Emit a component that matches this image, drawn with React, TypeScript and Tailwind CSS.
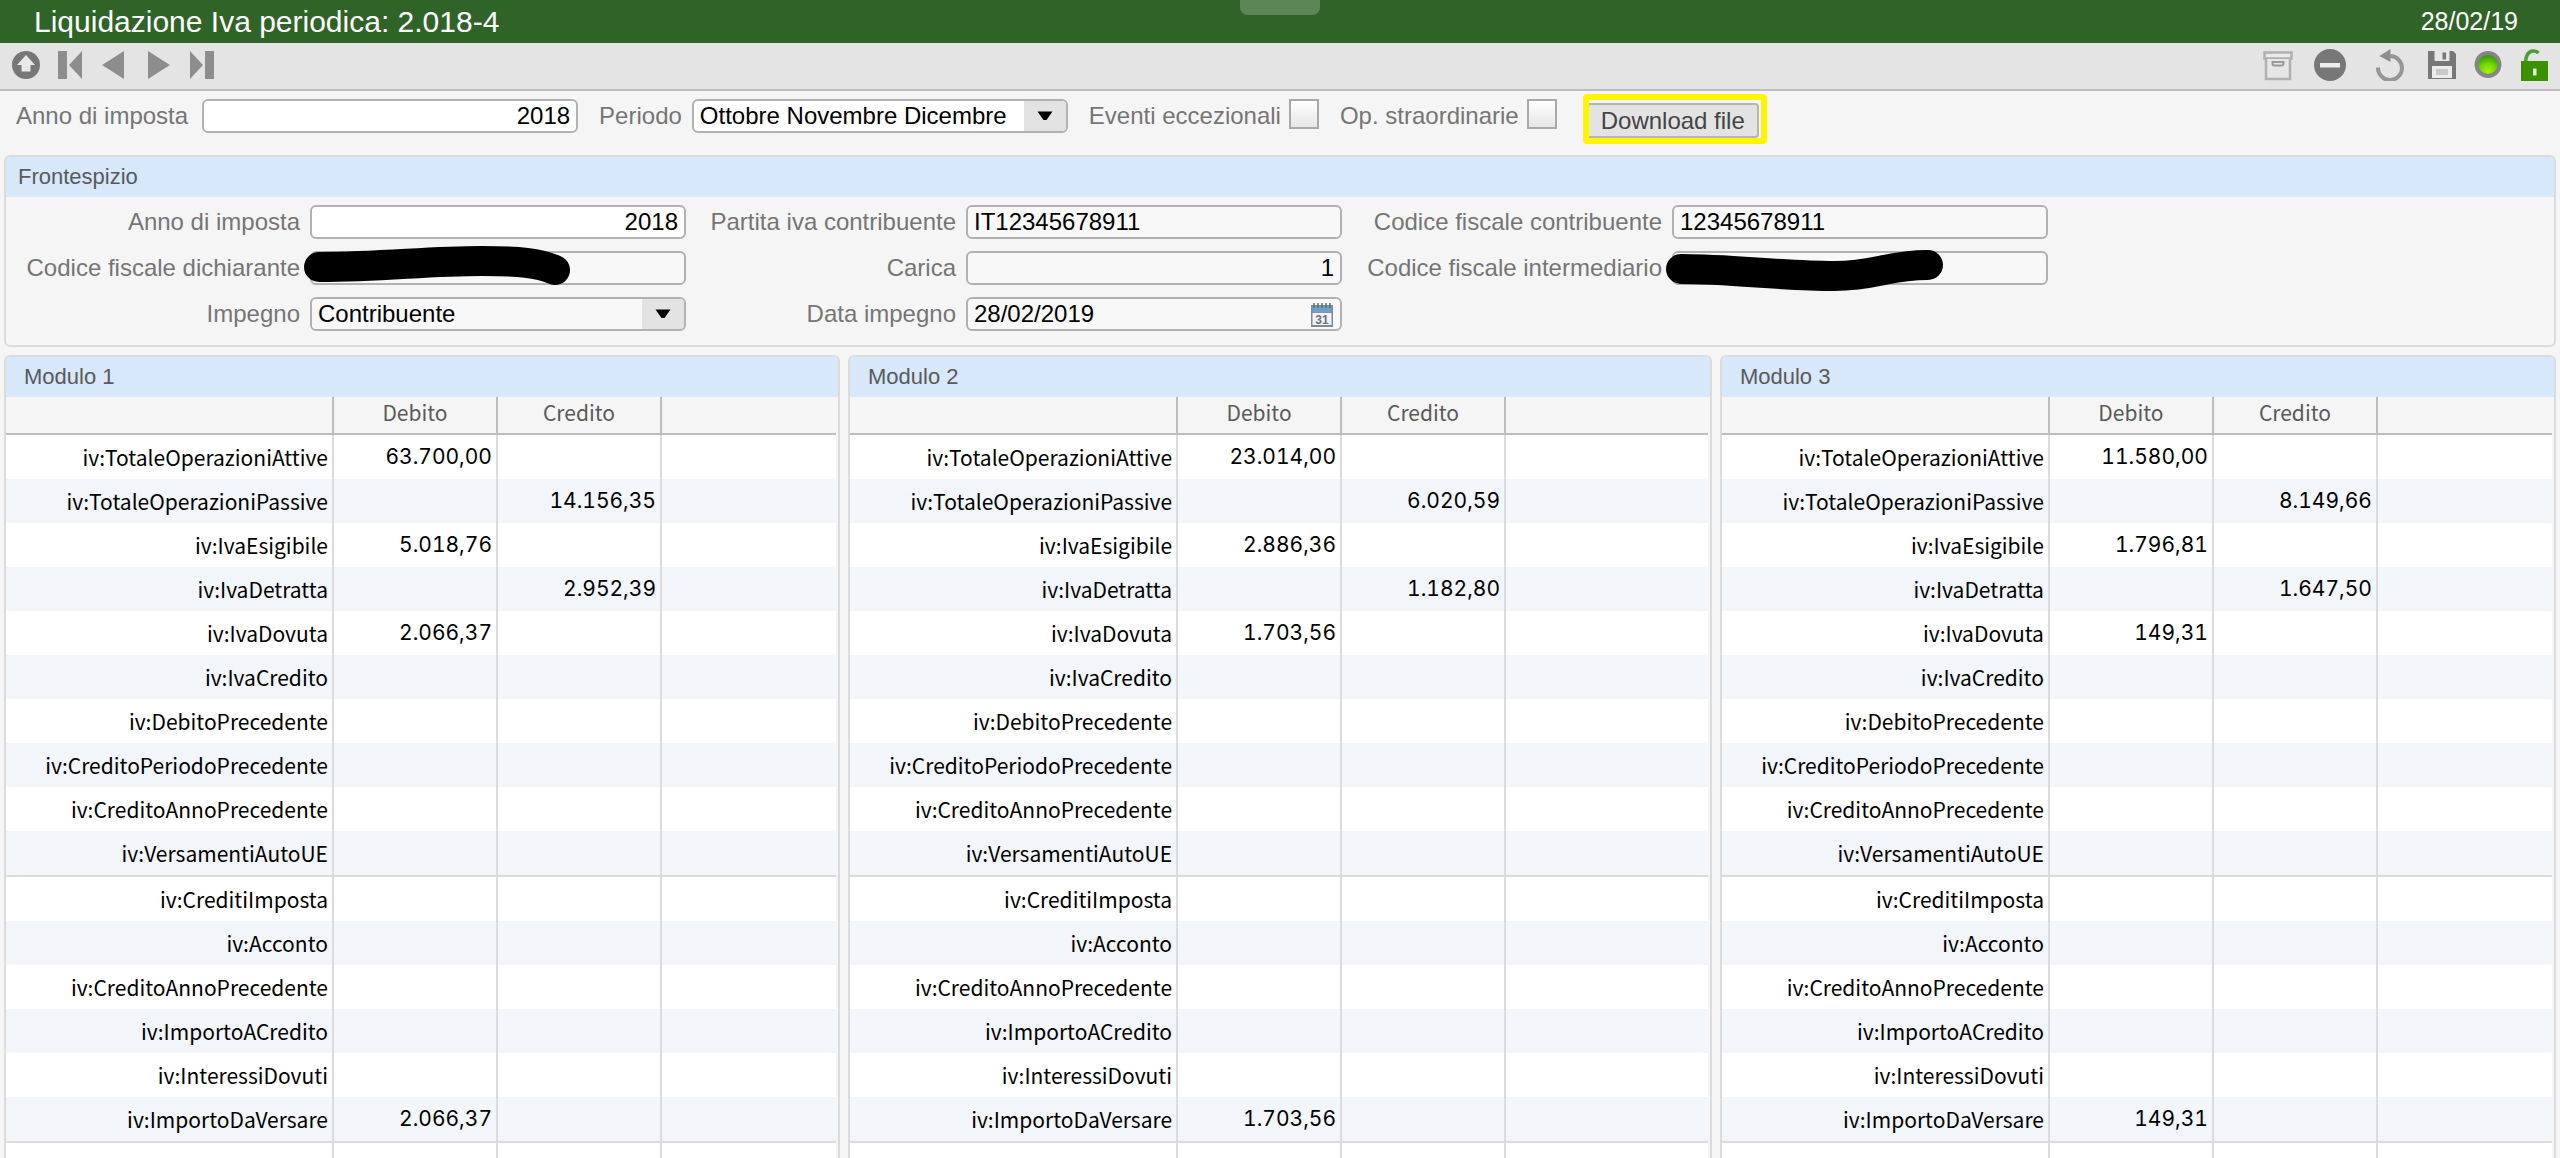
import React from 'react';

type Row = { name: string; debito?: string; credito?: string; last?: boolean };
type Amounts = Record<string, string>;

const entries = [
  { name: 'iv:TotaleOperazioniAttive', side: 'debito' },
  { name: 'iv:TotaleOperazioniPassive', side: 'credito' },
  { name: 'iv:IvaEsigibile', side: 'debito' },
  { name: 'iv:IvaDetratta', side: 'credito' },
  { name: 'iv:IvaDovuta', side: 'debito' },
  { name: 'iv:IvaCredito', side: 'credito' },
  { name: 'iv:DebitoPrecedente', side: 'debito' },
  { name: 'iv:CreditoPeriodoPrecedente', side: 'credito' },
  { name: 'iv:CreditoAnnoPrecedente', side: 'credito' },
  { name: 'iv:VersamentiAutoUE', side: 'credito', last: true },
  { name: 'iv:CreditiImposta', side: 'credito' },
  { name: 'iv:Acconto', side: 'credito' },
  { name: 'iv:CreditoAnnoPrecedente', side: 'credito' },
  { name: 'iv:ImportoACredito', side: 'credito' },
  { name: 'iv:InteressiDovuti', side: 'debito' },
  { name: 'iv:ImportoDaVersare', side: 'debito', last: true },
];

const modules: { title: string; amounts: Amounts }[] = [
  {
    title: 'Modulo 1',
    amounts: {
      'iv:TotaleOperazioniAttive': '63.700,00',
      'iv:TotaleOperazioniPassive': '14.156,35',
      'iv:IvaEsigibile': '5.018,76',
      'iv:IvaDetratta': '2.952,39',
      'iv:IvaDovuta': '2.066,37',
      'iv:ImportoDaVersare': '2.066,37',
    },
  },
  {
    title: 'Modulo 2',
    amounts: {
      'iv:TotaleOperazioniAttive': '23.014,00',
      'iv:TotaleOperazioniPassive': '6.020,59',
      'iv:IvaEsigibile': '2.886,36',
      'iv:IvaDetratta': '1.182,80',
      'iv:IvaDovuta': '1.703,56',
      'iv:ImportoDaVersare': '1.703,56',
    },
  },
  {
    title: 'Modulo 3',
    amounts: {
      'iv:TotaleOperazioniAttive': '11.580,00',
      'iv:TotaleOperazioniPassive': '8.149,66',
      'iv:IvaEsigibile': '1.796,81',
      'iv:IvaDetratta': '1.647,50',
      'iv:IvaDovuta': '149,31',
      'iv:ImportoDaVersare': '149,31',
    },
  },
];

const boxClass = 'block h-[34px] w-full rounded-md border-2 border-[#b1b1b1] px-1.5 text-2xl leading-[30px] text-black';

function Label({ htmlFor, children }: { htmlFor: string; children: React.ReactNode }) {
  return (
    <label htmlFor={htmlFor} className="text-right text-2xl leading-[34px] whitespace-nowrap text-[#757575]">
      {children}
    </label>
  );
}

function TextBox({ id, value = '', numeric, editable }: { id: string; value?: string; numeric?: boolean; editable?: boolean }) {
  return (
    <input
      id={id}
      type="text"
      defaultValue={value}
      readOnly={!editable}
      className={`${boxClass} ${numeric ? 'text-right' : ''} ${editable ? 'bg-white' : 'bg-[#f8f8f8]'}`}
    />
  );
}

function SelectBox({ id, value, editable }: { id: string; value: string; editable?: boolean }) {
  return (
    <div className="relative">
      <select id={id} defaultValue={value} className={`${boxClass} appearance-none pr-11 ${editable ? 'bg-white' : 'bg-[#f8f8f8]'}`}>
        <option>{value}</option>
      </select>
      <span className="pointer-events-none absolute inset-y-0.5 right-0.5 flex w-[42px] items-center justify-center rounded-r bg-[#e3e3e3]">
        <svg viewBox="0 0 16 10" className="h-2.5 w-4">
          <path d="M0.5 0.5h15L9.5 9h-3z" fill="#000" />
        </svg>
      </span>
    </div>
  );
}

function CheckField({ id, label }: { id: string; label: string }) {
  return (
    <div className="flex gap-2">
      <Label htmlFor={id}>{label}</Label>
      <input
        id={id}
        type="checkbox"
        className="size-[30px] appearance-none border-2 border-[#a9a9a9] bg-linear-to-b from-white to-[#e6e6e6]"
      />
    </div>
  );
}

function ToolButton({ label, children }: { label: string; children: React.ReactNode }) {
  return (
    <button type="button" aria-label={label} className="block">
      {children}
    </button>
  );
}

function Toolbar() {
  return (
    <div className="flex h-12 shrink-0 items-start justify-between border-b-2 border-[#bdbdbd] bg-[#e4e4e4] pr-2.5 pl-3">
      <div className="flex gap-4 pt-2">
        <ToolButton label="Su">
          <svg viewBox="0 0 28 28" className="size-7">
            <circle cx="14" cy="14" r="14" fill="#777" />
            <path d="M14 4l9 10h-4.500v6.500h-9V14H5z" fill="#e8e8e8" />
          </svg>
        </ToolButton>
        <ToolButton label="Primo">
          <svg viewBox="0 0 28 28" className="size-7">
            <path d="M2 0h9v28H2zM26 0v28L13 14z" fill="#8d8d8d" />
          </svg>
        </ToolButton>
        <ToolButton label="Precedente">
          <svg viewBox="0 0 28 28" className="size-7">
            <path d="M24 0v28L2 14z" fill="#8d8d8d" />
          </svg>
        </ToolButton>
        <ToolButton label="Successivo">
          <svg viewBox="0 0 28 28" className="size-7">
            <path d="M4 0v28l22-14z" fill="#8d8d8d" />
          </svg>
        </ToolButton>
        <ToolButton label="Ultimo">
          <svg viewBox="0 0 28 28" className="size-7">
            <path d="M2 0v28l13-14zM17 0h9v28h-9z" fill="#8d8d8d" />
          </svg>
        </ToolButton>
      </div>
      <div className="flex gap-7 pt-1.5">
        <div className="flex gap-5">
          <ToolButton label="Archivia">
            <svg viewBox="0 0 32 32" className="size-8" fill="none" stroke="#b0b0b0" strokeWidth="2.500">
              <path d="M2.500 3.500h27v6h-27z" fill="#e9e9e9" />
              <path d="M4 10v20h24V10" fill="#e6e6e6" />
              <path d="M10.500 13v1.500q0 2 2 2h7q2 0 2-2V13z" stroke="#999" strokeWidth="2" />
            </svg>
          </ToolButton>
          <ToolButton label="Elimina">
            <svg viewBox="0 0 32 32" className="size-8">
              <circle cx="16" cy="16" r="16" fill="#777" />
              <path d="M6 14h20v4.500H6z" fill="#eee" />
            </svg>
          </ToolButton>
        </div>
        <div className="flex gap-5">
          <ToolButton label="Annulla">
            <svg viewBox="0 0 32 32" className="size-8">
              <path d="M4 18.500A12 12 0 1 0 16 7" fill="none" stroke="#969696" strokeWidth="4" />
              <path d="M16.500 0v13L5.500 7z" fill="#8d8d8d" />
            </svg>
          </ToolButton>
          <div className="flex gap-3.5">
            <ToolButton label="Salva">
              <svg viewBox="0 0 32 32" className="size-8">
                <path d="M2 2h25l3 3v25H2z" fill="#777" />
                <path d="M8.500 2h15v10h-15z" fill="#e6e6e6" />
                <path d="M16.500 3.500h3.500v7h-3.500z" fill="#777" />
                <path d="M6 17h20v12H6z" fill="#ececec" />
                <path d="M10 20h12v6H10z" fill="#c9c9c9" />
              </svg>
            </ToolButton>
            <ToolButton label="Stato">
              <svg viewBox="0 0 32 32" className="size-8">
                <defs>
                  <radialGradient id="led" cx="0.500" cy="0.800" r="0.750">
                    <stop offset="0" stopColor="#a4f000" />
                    <stop offset="0.450" stopColor="#74d800" />
                    <stop offset="1" stopColor="#259012" />
                  </radialGradient>
                </defs>
                <circle cx="16" cy="15.500" r="11.500" fill="url(#led)" stroke="#858585" strokeWidth="4" />
              </svg>
            </ToolButton>
            <ToolButton label="Blocca">
              <svg viewBox="0 0 32 32" className="size-8">
                <path d="M7.500 14Q8 2.500 15 2q3.500-0.300 5.500 2" fill="none" stroke="#4aa02c" strokeWidth="3.500" />
                <path d="M3 12h27v20H3z" fill="#3c9100" />
                <path d="M15 19.500h3.500v7H15z" fill="#e4f2dc" />
              </svg>
            </ToolButton>
          </div>
        </div>
      </div>
    </div>
  );
}

function Module({ title, amounts, className }: { title: string; amounts: Amounts; className: string }) {
  const rows: Row[] = entries.map(({ name, side, last }) => ({ name, [side]: amounts[name], last }));

  return (
    <section className={`${className} min-w-0 basis-0 rounded-t-md border-2 border-b-0 border-[#dcdcdc]`}>
      <h2 className="rounded-t bg-[#d7e8fa] px-[18px] text-[22px] leading-10 text-[#5a5a5a]">{title}</h2>
      <div className="pr-0.5">
        <table className="w-full table-fixed border-separate border-spacing-0 bg-white font-['Noto_Sans_CJK_JP',sans-serif] text-[21px] leading-6 text-black">
          <colgroup>
            <col className="w-[328px]" />
            <col className="w-[164px]" />
            <col className="w-[164px]" />
            <col />
          </colgroup>
          <thead>
            <tr className="h-[38px] bg-[#f5f5f5] text-[#5a5a5a] *:border-b-2 *:border-[#bdbdbd] *:px-0 *:pt-0 *:pb-1.5 *:font-normal">
              <td className="border-r-2" />
              <th scope="col" className="border-r-2">Debito</th>
              <th scope="col" className="border-r-2">Credito</th>
              <td />
            </tr>
          </thead>
          <tbody>
            {rows.map((row, i) => (
              <tr
                key={i}
                className={`even:bg-[#f2f5fa] *:border-[#dcdcdc] *:px-1 *:py-0 *:text-right *:font-normal ${
                  row.last ? 'h-[46px] *:border-b-2' : 'h-11'
                }`}
              >
                <th scope="row" className="border-r-2">{row.name}</th>
                <td className="border-r-2 font-[Inter,sans-serif] tabular-nums">{row.debito}</td>
                <td className="border-r-2 font-[Inter,sans-serif] tabular-nums">{row.credito}</td>
                <td />
              </tr>
            ))}
            <tr className="h-11 *:border-[#dcdcdc]">
              <td className="border-r-2" />
              <td className="border-r-2" />
              <td className="border-r-2" />
              <td />
            </tr>
          </tbody>
        </table>
      </div>
    </section>
  );
}

export default function App() {
  return (
    <div className="flex h-screen flex-col overflow-hidden bg-[#f5f5f5] font-['Liberation_Sans',Arial,sans-serif]">
      <header className="relative flex shrink-0 items-center justify-between bg-[#306328] pr-[42px] pl-[34px] text-white">
        <h1 className="text-[30px] leading-[43px]">Liquidazione Iva periodica: 2.018-4</h1>
        <span className="absolute top-0 left-1/2 h-[15px] w-20 -translate-x-1/2 rounded-b-lg bg-[#5c8655]" />
        <time className="text-[25px]">28/02/19</time>
      </header>

      <Toolbar />

      <div className="flex shrink-0 gap-[26px] pt-[3px] pb-[11px] pl-4">
        <div className="flex gap-[21px] pt-[5px]">
          <div className="flex gap-3.5">
            <Label htmlFor="anno">Anno di imposta</Label>
            <div className="w-[376px]">
              <TextBox id="anno" value="2018" numeric editable />
            </div>
          </div>
          <div className="flex gap-2.5">
            <Label htmlFor="periodo">Periodo</Label>
            <div className="w-[376px]">
              <SelectBox id="periodo" value="Ottobre Novembre Dicembre" editable />
            </div>
          </div>
          <CheckField id="eventi" label="Eventi eccezionali" />
          <CheckField id="straordinarie" label="Op. straordinarie" />
        </div>
        <div className="rounded border-[6px] border-[#fff500] pt-[3px] pr-0.5">
          <button
            type="button"
            className="block h-[35px] rounded-r border-2 border-l-0 border-[#b5b5b5] bg-[#e3e3e3] px-3 text-2xl leading-[31px] text-[#444]"
          >
            Download file
          </button>
        </div>
      </div>

      <section className="mx-1 mb-2 shrink-0 rounded-md border-2 border-[#dcdcdc]">
        <h2 className="rounded-t bg-[#d7e8fa] px-3 text-[22px] leading-10 text-[#5a5a5a]">Frontespizio</h2>
        <div className="grid grid-cols-[294px_376px_260px_376px_310px_376px] gap-x-2.5 gap-y-3 pt-2 pb-3.5">
          <Label htmlFor="f-anno">Anno di imposta</Label>
          <TextBox id="f-anno" value="2018" numeric editable />
          <Label htmlFor="f-partita">Partita iva contribuente</Label>
          <TextBox id="f-partita" value="IT12345678911" />
          <Label htmlFor="f-cf">Codice fiscale contribuente</Label>
          <TextBox id="f-cf" value="12345678911" />

          <Label htmlFor="f-dichiarante">Codice fiscale dichiarante</Label>
          <div className="relative">
            <TextBox id="f-dichiarante" />
            <svg viewBox="0 0 376 34" className="pointer-events-none absolute inset-0 h-[34px] w-[376px] overflow-visible">
              <path
                d="M9 16C75 16 115 10 172 10C210 10 228 12 245 19"
                fill="none"
                stroke="#000"
                strokeWidth="30"
                strokeLinecap="round"
              />
            </svg>
          </div>
          <Label htmlFor="f-carica">Carica</Label>
          <TextBox id="f-carica" value="1" numeric />
          <Label htmlFor="f-intermediario">Codice fiscale intermediario</Label>
          <div className="relative">
            <TextBox id="f-intermediario" />
            <svg viewBox="0 0 376 34" className="pointer-events-none absolute inset-0 h-[34px] w-[376px] overflow-visible">
              <path
                d="M9 18C60 18 110 25 162 25C205 25 215 14 256 14"
                fill="none"
                stroke="#000"
                strokeWidth="30"
                strokeLinecap="round"
              />
            </svg>
          </div>

          <Label htmlFor="f-impegno">Impegno</Label>
          <SelectBox id="f-impegno" value="Contribuente" />
          <Label htmlFor="f-data">Data impegno</Label>
          <div className="relative">
            <TextBox id="f-data" value="28/02/2019" />
            <button type="button" aria-label="Calendario" className="absolute top-1.5 right-2">
              <svg viewBox="0 0 24 24" className="size-6">
                <path d="M1 2h22v22H1z" fill="#7f8b96" />
                <path d="M2.500 3h19v6.500h-19z" fill="#6f9fc8" />
                <path d="M2.500 10h19v12h-19z" fill="#f1f3f5" />
                <path d="M4 0v5M8 0v5M12 0v5M16 0v5M20 0v5" stroke="#5c6b78" strokeWidth="1.500" />
                <text x="12" y="20.500" textAnchor="middle" fontSize="12" fontWeight="bold" fill="#6b7480">31</text>
              </svg>
            </button>
          </div>
        </div>
      </section>

      <div className="flex min-h-0 flex-1 gap-2 px-1">
        <Module {...modules[0]} className="grow-[836]" />
        <Module {...modules[1]} className="grow-[864]" />
        <Module {...modules[2]} className="grow-[836]" />
      </div>
    </div>
  );
}
